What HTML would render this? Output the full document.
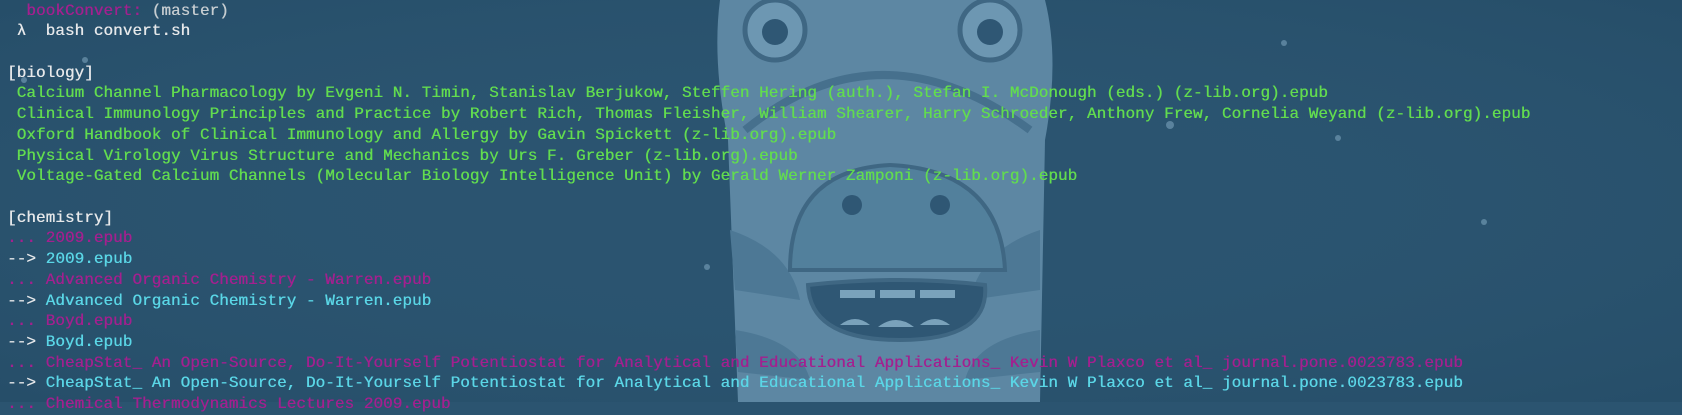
<!DOCTYPE html>
<html><head><meta charset="utf-8"><style>
html,body{margin:0;padding:0;width:1682px;height:402px;overflow:hidden;background:#2b5470;}
.bg{position:absolute;left:0;top:0;}
pre{position:absolute;left:7px;top:0.5px;margin:0;font-family:"Liberation Mono",monospace;font-size:16px;line-height:20.72px;letter-spacing:0.04px;color:#e6e8ea;white-space:pre;text-shadow:0.35px 0 0 currentColor;}
.g{color:#62dc4f}.m{color:#a3208f}.c{color:#5ad6e6}.w{color:#e6e8ea}.gr{color:#c5ccd0}
</style></head><body>
<svg class="bg" width="1682" height="402" viewBox="0 0 1682 402">
<rect width="1682" height="402" fill="#2b5470"/>
<radialGradient id="v" cx="0.5" cy="0.5" r="0.7"><stop offset="0" stop-color="#2e5a77" stop-opacity="0"/><stop offset="1" stop-color="#234a64" stop-opacity="0.6"/></radialGradient>
<rect width="1682" height="402" fill="url(#v)"/>
<path d="M720 0 L1045 0 Q1060 60 1045 140 L1040 402 L738 402 L728 140 Q712 60 720 0Z" fill="#5d87a3"/>
<path d="M730 230 Q790 250 800 300 L735 290Z M1040 230 Q980 250 970 300 L1040 290Z M735 330 Q800 340 810 380 L738 372Z M1040 330 Q975 340 965 380 L1040 372Z" fill="#4d7895"/>
<path d="M745 130 Q880 20 1030 130" stroke="#46708d" stroke-width="8" fill="none"/>
<circle cx="775" cy="30" r="30" fill="#6d97b2" stroke="#3f6783" stroke-width="5"/>
<circle cx="775" cy="32" r="13" fill="#2f5774"/>
<circle cx="990" cy="30" r="30" fill="#6d97b2" stroke="#3f6783" stroke-width="5"/>
<circle cx="990" cy="32" r="13" fill="#2f5774"/>
<path d="M790 270 Q790 170 890 165 Q1000 170 1005 270 Z" fill="#52809c" stroke="#3f6783" stroke-width="4"/>
<circle cx="852" cy="205" r="10" fill="#2f5774"/>
<circle cx="940" cy="205" r="10" fill="#2f5774"/>
<path d="M808 285 Q900 275 985 285 Q990 340 900 340 Q810 340 808 285Z" fill="#2f5774" stroke="#3f6783" stroke-width="4"/>
<path d="M840 290 h35 v8 h-35z M880 290 h35 v8 h-35z M920 290 h35 v8 h-35z M840 325 q15-12 30 0z M878 327 q18-14 36 0z M920 325 q15-12 30 0z" fill="#7aa2bb"/>
<g fill="#7aa2bb" opacity="0.6"><circle cx="85" cy="60" r="3"/><circle cx="1284" cy="43" r="3"/><circle cx="1170" cy="125" r="4"/><circle cx="1338" cy="138" r="3"/><circle cx="707" cy="267" r="3"/><circle cx="1484" cy="222" r="3"/><circle cx="24" cy="80" r="3"/></g>
</svg>
<pre>  <span class="m">bookConvert:</span> <span class="gr">(master)</span>
 λ  bash convert.sh

[biology]
<span class="g"> Calcium Channel Pharmacology by Evgeni N. Timin, Stanislav Berjukow, Steffen Hering (auth.), Stefan I. McDonough (eds.) (z-lib.org).epub
 Clinical Immunology Principles and Practice by Robert Rich, Thomas Fleisher, William Shearer, Harry Schroeder, Anthony Frew, Cornelia Weyand (z-lib.org).epub
 Oxford Handbook of Clinical Immunology and Allergy by Gavin Spickett (z-lib.org).epub
 Physical Virology Virus Structure and Mechanics by Urs F. Greber (z-lib.org).epub
 Voltage-Gated Calcium Channels (Molecular Biology Intelligence Unit) by Gerald Werner Zamponi (z-lib.org).epub</span>

[chemistry]
<span class="m">... 2009.epub</span>
--&gt; <span class="c">2009.epub</span>
<span class="m">... Advanced Organic Chemistry - Warren.epub</span>
--&gt; <span class="c">Advanced Organic Chemistry - Warren.epub</span>
<span class="m">... Boyd.epub</span>
--&gt; <span class="c">Boyd.epub</span>
<span class="m">... CheapStat_ An Open-Source, Do-It-Yourself Potentiostat for Analytical and Educational Applications_ Kevin W Plaxco et al_ journal.pone.0023783.epub</span>
--&gt; <span class="c">CheapStat_ An Open-Source, Do-It-Yourself Potentiostat for Analytical and Educational Applications_ Kevin W Plaxco et al_ journal.pone.0023783.epub</span>
<span class="m">... Chemical Thermodynamics Lectures 2009.epub</span>
</pre>
</body></html>
